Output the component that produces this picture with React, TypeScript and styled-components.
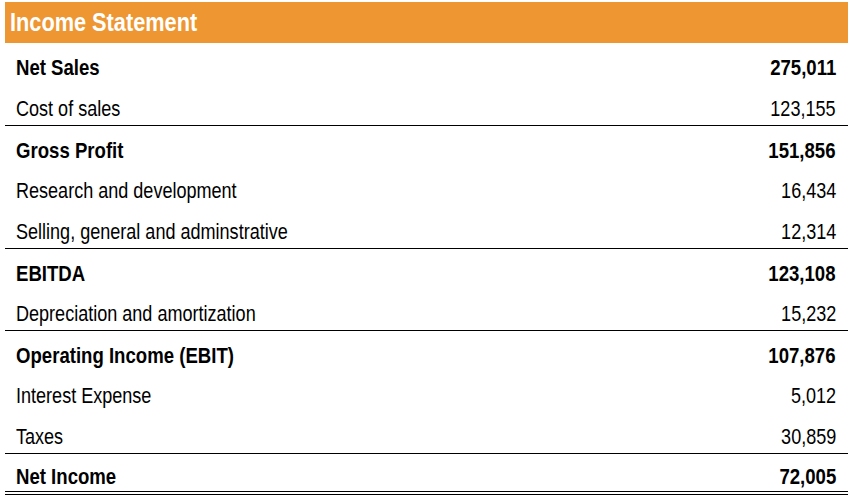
import styled, { createGlobalStyle } from "styled-components";

const GlobalStyle = createGlobalStyle`
  body {
    margin: 0;
    background: #ffffff;
    font-family: "Liberation Sans Narrow", "Arial Narrow", "Liberation Sans", Arial, sans-serif;
    color: #000000;
  }
`;

type LineItem = {
  label: string;
  value: string;
  total?: boolean;
  ruled?: boolean;
  final?: boolean;
};

const items: LineItem[] = [
  { label: "Net Sales", value: "275,011", total: true },
  { label: "Cost of sales", value: "123,155" },
  { label: "Gross Profit", value: "151,856", total: true, ruled: true },
  { label: "Research and development", value: "16,434" },
  { label: "Selling, general and adminstrative", value: "12,314" },
  { label: "EBITDA", value: "123,108", total: true, ruled: true },
  { label: "Depreciation and amortization", value: "15,232" },
  { label: "Operating Income (EBIT)", value: "107,876", total: true, ruled: true },
  { label: "Interest Expense", value: "5,012" },
  { label: "Taxes", value: "30,859" },
  { label: "Net Income", value: "72,005", total: true, ruled: true, final: true },
];

const App = () => {
  return (
    <>
      <GlobalStyle />
      <Statement>
        <Title_Bar>
          <Title_Text>Income Statement</Title_Text>
        </Title_Bar>
        {items.map((item) => (
          <Row key={item.label} ruled={item.ruled} final={item.final}>
            <Label total={item.total}>{item.label}</Label>
            <Amount total={item.total}>{item.value}</Amount>
          </Row>
        ))}
      </Statement>
    </>
  );
};

export default App;

// no narrow face installed, so the Arial-Narrow look is faked with a horizontal squeeze
const narrow = (bold?: boolean) => `
  display: inline-block;
  white-space: nowrap;
  font-weight: ${bold ? "bold" : "normal"};
  transform: scaleX(${bold ? 0.845 : 0.82});
`;

const Statement = styled.section`
  width: 843px;
  margin: 2px 0 0 5px;
  display: flex;
  flex-direction: column;
`;

const Title_Bar = styled.h2`
  margin: 0;
  height: 41px;
  padding-left: 5px;
  display: flex;
  align-items: center;
  background: #ee9632;
  color: #ffffff;
  font-size: 26.5px;
`;

const Title_Text = styled.span`
  ${narrow(true)};
  transform: scaleX(0.82);
  transform-origin: left center;
`;

const Row = styled.div<{ ruled?: boolean; final?: boolean }>`
  box-sizing: border-box;
  height: ${(props) => (props.final ? "42px" : "41px")};
  padding: 9px 12px 0 11px;
  display: flex;
  align-items: center;
  justify-content: space-between;
  border-top: ${(props) => (props.ruled ? "1px solid #000000" : "none")};
  border-bottom: ${(props) => (props.final ? "4px double #000000" : "none")};
  font-size: 22px;
  line-height: 22px;
`;

const Label = styled.span<{ total?: boolean }>`
  ${(props) => narrow(props.total)};
  transform-origin: left center;
`;

const Amount = styled.span<{ total?: boolean }>`
  ${(props) => narrow(props.total)};
  transform-origin: right center;
`;
